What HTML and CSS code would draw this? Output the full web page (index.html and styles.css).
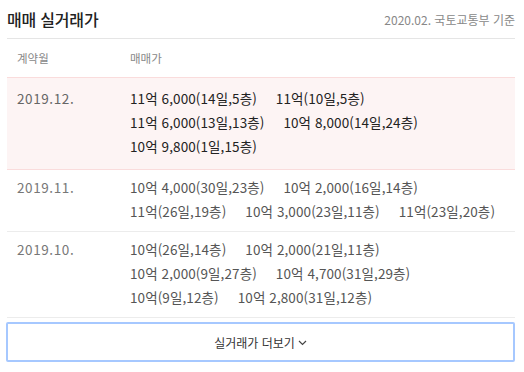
FILE: index.html
```html
<!DOCTYPE html>
<html lang="ko">
<head>
<meta charset="utf-8">
<link rel="stylesheet" href="styles.css">
</head>
<body>
<section class="panel">
  <header class="top">
    <h2 class="title">매매 실거래가</h2>
    <span class="source">2020.02. 국토교통부 기준</span>
  </header>
  <div class="thead">
    <span class="col-month">계약월</span>
    <span class="col-price">매매가</span>
  </div>
  <div class="row active">
    <span class="col-month">2019.12.</span>
    <div class="col-price prices">
      <span>11억 6,000(14일,5층)</span>
      <span>11억(10일,5층)</span>
      <span>11억 6,000(13일,13층)</span>
      <span>10억 8,000(14일,24층)</span>
      <span>10억 9,800(1일,15층)</span>
    </div>
  </div>
  <div class="row">
    <span class="col-month">2019.11.</span>
    <div class="col-price prices">
      <span>10억 4,000(30일,23층)</span>
      <span>10억 2,000(16일,14층)</span>
      <span>11억(26일,19층)</span>
      <span>10억 3,000(23일,11층)</span>
      <span>11억(23일,20층)</span>
    </div>
  </div>
  <div class="row">
    <span class="col-month">2019.10.</span>
    <div class="col-price prices">
      <span>10억(26일,14층)</span>
      <span>10억 2,000(21일,11층)</span>
      <span>10억 2,000(9일,27층)</span>
      <span>10억 4,700(31일,29층)</span>
      <span>10억(9일,12층)</span>
      <span>10억 2,800(31일,12층)</span>
    </div>
  </div>
  <button class="more">실거래가 더보기<svg class="chev" width="9" height="6" viewBox="0 0 9 6"><path d="M1 1l3.5 3.5L8 1" fill="none" stroke="#444" stroke-width="1.2"/></svg></button>
</section>
</body>
</html>
```
FILE: styles.css
```css
html, body { margin: 0; padding: 0; background: #fff; }
body { font-family: "Noto Sans CJK KR", "Noto Sans", sans-serif; color: #333; }
.panel { width: 508px; margin-left: 7px; }
.top { display: flex; justify-content: space-between; align-items: center; height: 38px; border-bottom: 1px solid #e5e5e5; }
.title { margin: 0; font-size: 16px; font-weight: 500; color: #222; letter-spacing: -0.2px; }
.source { font-size: 12px; color: #888; letter-spacing: 0; }
.thead { display: flex; align-items: center; height: 38px; font-size: 11.5px; color: #888; border-bottom: 1px solid #fadcdc; }
.col-month { width: 113px; padding-left: 10px; flex: none; }
.col-price { flex: 1; }
.row { display: flex; align-items: flex-start; padding: 5px 0 8px; border-bottom: 1px solid #ececec; font-size: 13.5px; line-height: 24px; color: #555; letter-spacing: 0.1px; }
.row .col-month { color: #777; letter-spacing: 0.6px; }
.row.active { background: #fdf4f4; border-bottom-color: #fadcdc; color: #222; padding: 8px 0 11px; }
.row.active .col-month { color: #666; }
.prices { display: flex; flex-wrap: wrap; column-gap: 19px; padding-right: 8px; }
.more { display: flex; align-items: center; justify-content: center; gap: 3px; width: 509px; height: 40px; margin: 4px 0 0 -1px; background: #fff; border: 2px solid #a6c8ff; border-radius: 2px; font-family: inherit; font-size: 12px; color: #333; cursor: pointer; }
.chev { margin-top: 1px; }
```
